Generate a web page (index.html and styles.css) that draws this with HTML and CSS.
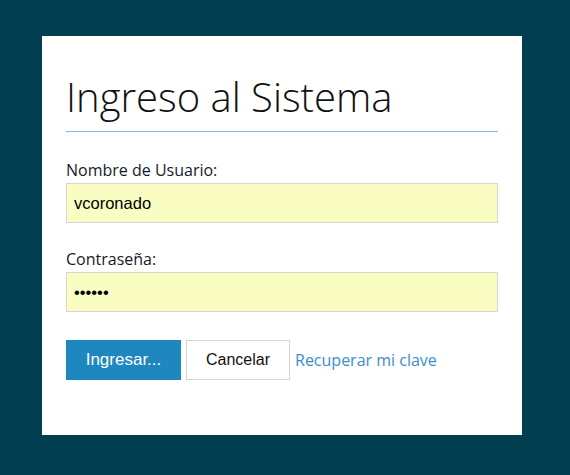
FILE: index.html
```html
<!DOCTYPE html>
<html lang="es">
<head>
<meta charset="utf-8">
<title>Ingreso al Sistema</title>
<link rel="stylesheet" href="styles.css">
</head>
<body>
<main class="card">
  <h1 class="title">Ingreso al Sistema</h1>
  <form class="form">
    <label class="field">
      <span class="label">Nombre de Usuario:</span>
      <input class="input" type="text" value="vcoronado">
    </label>
    <label class="field">
      <span class="label">Contraseña:</span>
      <input class="input" type="password" value="secret">
    </label>
    <div class="actions">
      <button class="btn btn-primary" type="button">Ingresar...</button>
      <button class="btn btn-default" type="button">Cancelar</button>
      <a class="link" href="#">Recuperar mi clave</a>
    </div>
  </form>
</main>
</body>
</html>
```

FILE: styles.css
```css
html, body {
  margin: 0;
  padding: 0;
}
body {
  background: #013e4f;
  width: 570px;
  height: 475px;
  overflow: hidden;
  padding-top: 36px;
  padding-left: 42px;
  box-sizing: border-box;
}
.card {
  width: 480px;
  height: 399px;
  background: #ffffff;
  box-sizing: border-box;
  padding: 24px 24px;
}
.title {
  margin: 0;
  font-family: "Open Sans", sans-serif;
  font-weight: 300;
  font-size: 40px;
  line-height: 56px;
  color: #111111;
  padding-top: 9px;
  padding-bottom: 6px;
  border-bottom: 1px solid #8fb4d8;
}
.form {
  display: flex;
  flex-direction: column;
  margin-top: 28px;
}
.field {
  display: flex;
  flex-direction: column;
  margin-bottom: 26px;
}
.label {
  font-family: "Open Sans", sans-serif;
  font-size: 16px;
  line-height: 20px;
  color: #161a2a;
  margin-bottom: 3px;
}
.input {
  height: 40px;
  box-sizing: border-box;
  border: 1px solid #d6d6d6;
  background: #f9fdc1;
  font-family: "Liberation Sans", Arial, sans-serif;
  font-size: 16.5px;
  padding: 0 7px;
  color: #000;
  outline: none;
}
.actions {
  display: flex;
  align-items: center;
  gap: 5px;
  margin-top: 2px;
}
.btn {
  height: 40px;
  box-sizing: border-box;
  font-family: "Liberation Sans", Arial, sans-serif;
  font-size: 16px;
  padding: 0 10px;
  cursor: pointer;
}
.btn-primary {
  width: 115px;
  background: #1f87c0;
  color: #ffffff;
  border: 1px solid #1f87c0;
  font-size: 17px;
}
.btn-default {
  width: 104px;
  background: #ffffff;
  color: #111111;
  border: 1px solid #d6d6d6;
}
.link {
  font-family: "Open Sans", sans-serif;
  font-size: 16px;
  color: #3a8dd0;
  text-decoration: none;
}
```
